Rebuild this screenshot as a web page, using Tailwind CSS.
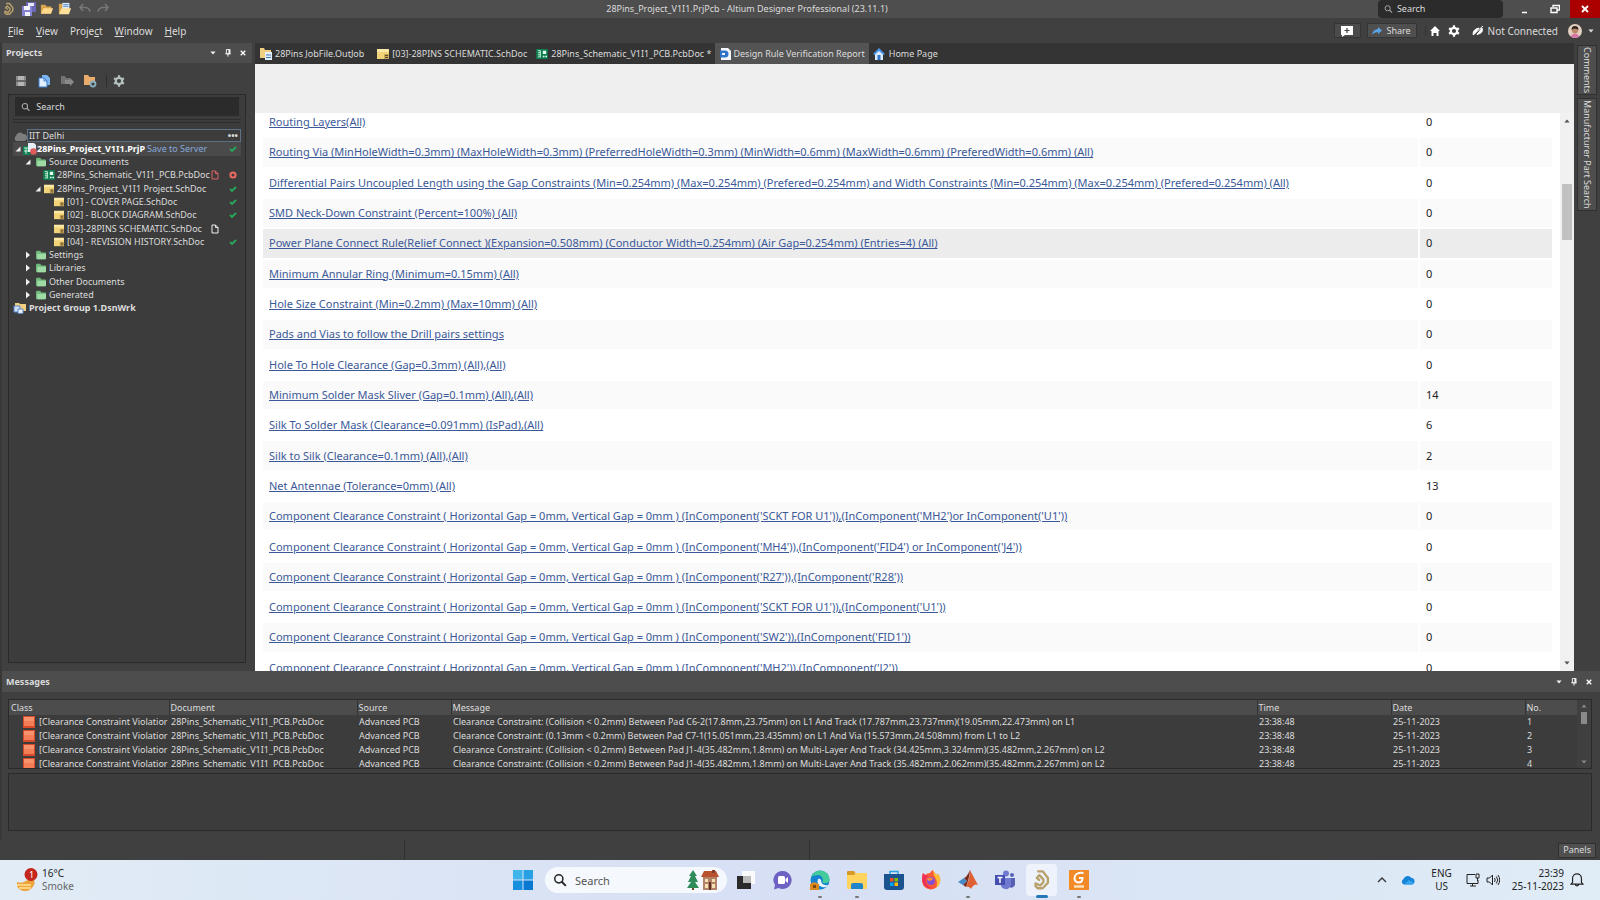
<!DOCTYPE html>
<html lang="en">
<head>
    <meta charset="UTF-8">
    <meta name="viewport" content="width=device-width, initial-scale=1">
    <title>28Pins_Project_V1I1.PrjPcb - Altium Designer Professional (23.11.1)</title>
    <script src="https://cdn.jsdelivr.net/npm/@tailwindcss/browser@4"></script>
</head>
<body class="flex h-screen flex-col overflow-hidden bg-[#404040] font-['Noto_Sans',sans-serif] text-[9px] leading-3 text-[#dcdcdc]">

<!-- shared icons -->
<svg class="hidden">
    <symbol id="logo" viewBox="0 0 16 16"><path d="M4.500 1.700H8.500L12.300 6.500V10L8.500 14H5L3.300 12.500V10.500L6.800 12 9 9.500V7.500L6 4.500 4.200 6.500 6.500 8.500" fill="none" stroke="#b8a06c" stroke-width="1.700" stroke-linejoin="round"/></symbol>
    <symbol id="sch" viewBox="0 0 14 12"><path d="M1 1h12v10H1z" fill="#f3d377"/><path d="M1 1h12v3H1z" fill="#fbe8a6"/><path d="M8 6h5v5H8z" fill="#c9a75a"/><path d="M9 7.500h3M9 9.500h3" stroke="#5a4a2a"/></symbol>
    <symbol id="pcb" viewBox="0 0 14 12"><path d="M0 0h14v12H0z" fill="#0f7c50"/><path d="M2 2h3M2 4.500h3M2 7h3M2 9.500h3M5 2v8" stroke="#c5f3da" stroke-width="1.200"/><path d="M8 2h4v4H8zM8 8h2v2H8zM11 8h2v2h-2z" fill="#e5fff2"/></symbol>
    <symbol id="folder" viewBox="0 0 14 12"><path d="M1 2.500Q1 1 2.500 1H6l1.500 2H12q1 0 1 1v6q0 1-1 1H2q-1 0-1-1z" fill="#6fb77a"/><path d="M2.500 4.500H13V10q0 1-1 1H2.500z" fill="#9fdca5"/></symbol>
    <symbol id="yfolder" viewBox="0 0 16 14"><path d="M1 2h5l1.500 2H13v8H1z" fill="#d6a44c"/><path d="M4 6h11l-2.500 6.500H1z" fill="#ffd98c"/></symbol>
    <symbol id="pin" viewBox="0 0 8 10"><path d="M2 .5h4.500V6H2zM.5 6h7M4 6v3.500" fill="none" stroke="#f2f2f2" stroke-width="1.200"/><path d="M4.500 1H6.500v5H4.500z" fill="#f2f2f2"/></symbol>
    <symbol id="cross" viewBox="0 0 8 8"><path d="M1 1l6 6M7 1L1 7" stroke="#fff" stroke-width="1.800"/></symbol>
    <symbol id="down" viewBox="0 0 8 5"><path d="M.5.500h7L4 4.500z" fill="currentColor"/></symbol>
    <symbol id="up" viewBox="0 0 8 5"><path d="M.5 4.500h7L4 .5z" fill="currentColor"/></symbol>
    <symbol id="open" viewBox="0 0 6 6"><path d="M5.500.500v5h-5z" fill="#f0f0f0"/></symbol>
    <symbol id="closed" viewBox="0 0 6 8"><path d="M1 .5L5 4 1 7.500z" fill="#f0f0f0"/></symbol>
    <symbol id="check" viewBox="0 0 8 6"><path d="M1 3l2 2 4-4" fill="none" stroke="#27a85a" stroke-width="1.800"/></symbol>
    <symbol id="page" viewBox="0 0 8 10"><path d="M1 1h3.500L7 3.500V9H1zM4.500 1v2.500H7" fill="none" stroke="currentColor"/></symbol>
    <symbol id="lens" viewBox="0 0 12 12"><circle cx="5" cy="5" r="3.500" fill="none" stroke="currentColor" stroke-width="1.300"/><path d="M7.500 7.500L11 11" stroke="currentColor" stroke-width="1.600"/></symbol>
    <symbol id="gear" viewBox="0 0 12 12"><circle cx="6" cy="6" r="3.200" fill="none" stroke="currentColor" stroke-width="2.200"/><path d="M6 .3v2M6 9.700v2M1.100 3.200l1.600 1M9.300 7.800l1.600 1M1.100 8.800l1.600-1M9.300 4.200l1.600-1" stroke="currentColor" stroke-width="2.200"/></symbol>
    <symbol id="square" viewBox="0 0 12 12"><path d="M0 0h12v12H0z" fill="#d94a2b"/><path d="M1 1h10v9H1z" fill="#f27d56"/><path d="M1 1h10v4H1z" fill="#f6926c"/></symbol>
</svg>

<!-- title bar -->
<header class="flex h-[18px] shrink-0 items-center bg-[#4e4e4e]">
    <div class="flex flex-1 items-center gap-1 pl-0.5">
        <svg class="size-3.5"><use href="#logo"/></svg>
        <button class="ml-0.5" aria-label="Save all"><svg class="h-3.5 w-3.5" viewBox="0 0 14 14"><path d="M4 0h10v10H4z" fill="#6a68b5"/><path d="M6 1h6v3H6z" fill="#e8e8ff"/><path d="M0 4h10v10H0z" fill="#8583d1"/><path d="M2 4h6v4H2zM3 10h5v4H3z" fill="#f3f3ff"/></svg></button>
        <button aria-label="Open"><svg class="h-3.5 w-3.5"><use href="#yfolder"/></svg></button>
        <button aria-label="Open project"><svg class="h-3.5 w-3.5" viewBox="0 0 16 14"><path d="M1 1h8v11H1z" fill="#d6a44c"/><path d="M5 0h8v8H5z" fill="#dcecff"/><path d="M6 2h6M6 4h6" stroke="#4a7fc0"/><path d="M4 6h11l-2.500 7H1z" fill="#ffe09a"/></svg></button>
        <button class="ml-0.5" aria-label="Undo"><svg class="h-3 w-3.5" viewBox="0 0 14 12"><path d="M5 1L2 4.500 5 8M2 4.500h5q4 0 5 4" fill="none" stroke="#777" stroke-width="1.600"/></svg></button>
        <button aria-label="Redo"><svg class="h-3 w-3.5" viewBox="0 0 14 12"><path d="M9 1l3 3.500L9 8M12 4.500H7q-4 0-5 4" fill="none" stroke="#777" stroke-width="1.600"/></svg></button>
    </div>
    <h1 class="pr-[108px]">28Pins_Project_V1I1.PrjPcb - Altium Designer Professional (23.11.1)</h1>
    <div class="flex h-full flex-1 items-center justify-end">
        <label class="flex h-full w-[125px] items-center gap-1 rounded-sm bg-[#2b2b2b] px-1.5">
            <svg class="size-2.5 text-[#aaa]"><use href="#lens"/></svg>
            <input class="w-full bg-transparent placeholder:text-[#dcdcdc]" type="search" placeholder="Search" aria-label="Search commands">
        </label>
        <button class="ml-1.5 grid h-full w-[30px] place-items-center" aria-label="Minimize"><svg class="size-2.5" viewBox="0 0 10 10"><path d="M3 8.500h5" stroke="#fff" stroke-width="1.500"/></svg></button>
        <button class="grid h-full w-[31px] place-items-center" aria-label="Restore"><svg class="size-2.5" viewBox="0 0 10 10"><path d="M3 3V1.500h6.500V6H7.500M1 4h6v4.500H1z" fill="none" stroke="#fff" stroke-width="1.400"/></svg></button>
        <button class="grid h-full w-[30px] place-items-center bg-[#ab0000]" aria-label="Close"><svg class="size-2"><use href="#cross"/></svg></button>
    </div>
</header>

<!-- menu bar -->
<div class="flex h-[25px] shrink-0 items-center justify-between bg-[#404040] pl-2 text-[10px]">
    <nav class="flex items-center gap-3">
        <button><u>F</u>ile</button>
        <button><u>V</u>iew</button>
        <button>Proje<u>c</u>t</button>
        <button><u>W</u>indow</button>
        <button><u>H</u>elp</button>
    </nav>
    <div class="flex items-center pr-1.5">
        <button class="grid h-[15px] w-[27px] place-items-center border border-[#353535] bg-[#4b4b4b]" aria-label="New comment"><svg class="h-3 w-3.5" viewBox="0 0 14 12"><path d="M1 1h12v9H5l-3 2v-2H1z" fill="#fff"/><path d="M7 3v5M4.500 5.500h5" stroke="#444" stroke-width="1.200"/></svg></button>
        <button class="ml-1.5 flex h-[15px] w-[50px] items-center justify-center gap-1 border border-[#353535] bg-[#4f4f4f] text-[9px]"><svg class="h-2 w-2.5" viewBox="0 0 10 8"><path d="M6 0l4 3.500L6 7V5Q2 5 0 7.500 1 2.500 6 2z" fill="#5aa5e6"/></svg>Share</button>
        <button class="ml-2 border-l border-[#353535] pl-1" aria-label="Home"><svg class="size-2.5" viewBox="0 0 10 10"><path d="M5 0l5 5H8.500v5h-2V7h-3v3h-2V5H0z" fill="#fff"/></svg></button>
        <button class="ml-2 text-white" aria-label="Settings"><svg class="size-3"><use href="#gear"/></svg></button>
        <button class="ml-3 flex items-center gap-1"><svg class="size-3" viewBox="0 0 12 12"><path d="M1 10L11 1M1 9.500Q1 4 7 3L2.500 9zM5 9.500l5-6.500q2 5-5 6.500" fill="#fff" stroke="#fff"/></svg>Not Connected</button>
        <button class="ml-2.5 flex items-center gap-1.5 text-[#ddd]" aria-label="Account"><svg class="size-3.5" viewBox="0 0 14 14"><circle cx="7" cy="7" r="7" fill="#e3cfc0"/><path d="M2.500 12q4.500-5 9 0-4.500 4-9 0" fill="#d774a8"/><circle cx="7" cy="6.500" r="3" fill="#b98564"/><path d="M3.500 6Q3.500 2 7 2t3.500 4Q9 4.500 7 4.500T3.500 6" fill="#30231d"/></svg><svg class="h-1 w-1.5"><use href="#down"/></svg></button>
    </div>
</div>

<div class="flex min-h-0 flex-1">
    <!-- projects panel -->
    <aside class="flex w-[252px] shrink-0 flex-col border-l-2 border-[#383838]">
        <div class="flex h-5 shrink-0 items-center gap-2 bg-[#4d4d4d] pr-1.5 pl-1">
            <h2 class="flex-1 font-bold">Projects</h2>
            <button class="text-[#f0f0f0]" aria-label="Panel options"><svg class="h-1 w-1.5"><use href="#down"/></svg></button>
            <button aria-label="Pin panel"><svg class="h-2 w-2"><use href="#pin"/></svg></button>
            <button aria-label="Close panel"><svg class="size-1.5"><use href="#cross"/></svg></button>
        </div>
        <div class="flex h-[31px] shrink-0 items-center gap-[9px] pt-1 pl-3">
            <button aria-label="Save"><svg class="size-3.5" viewBox="0 0 14 14"><path d="M2 2h10v10H2z" fill="#8a8a8a"/><path d="M4 2h6v4H4zM4 8h6v4H4z" fill="#b5b5b5"/><path d="M2 7h10" stroke="#444"/></svg></button>
            <button aria-label="Compile"><svg class="size-3.5" viewBox="0 0 14 14"><path d="M5 1h5l3 3v7H5z" fill="#7db5f0"/><path d="M2 4h5l3 3v6H2z" fill="#e2f0ff" stroke="#3d7fd0"/><path d="M7 4v3h3" fill="none" stroke="#3d7fd0"/></svg></button>
            <button aria-label="Explore"><svg class="size-3.5" viewBox="0 0 14 14"><path d="M1 2h4l1 2h4v6H1z" fill="#737373"/><path d="M5 6h5V4l4 4-4 4v-2H5z" fill="#8a8a8a"/></svg></button>
            <button aria-label="Project options"><svg class="size-3.5" viewBox="0 0 14 14"><path d="M1 1h4l1.500 2H12v8H1z" fill="#e9ad6c"/><circle cx="10" cy="10" r="2.500" fill="#404040" stroke="#8ab0c0" stroke-width="1.800"/></svg></button>
            <button class="border-l border-[#2c2c2c] pl-1.5 text-[#b5c0c0]" aria-label="Panel settings"><svg class="size-3"><use href="#gear"/></svg></button>
        </div>
        <div class="mr-1.5 mb-2 ml-1.5 flex min-h-0 flex-1 flex-col border border-[#2a2a2a] bg-[#3c3c3c]">
            <label class="mx-1.5 mt-0.5 flex h-[19px] shrink-0 items-center gap-1.5 bg-[#2b2b2b] px-1.5">
                <svg class="size-2.5 text-[#aaa]"><use href="#lens"/></svg>
                <input class="w-full bg-transparent placeholder:text-[#dcdcdc]" type="search" placeholder="Search" aria-label="Search projects">
            </label>
            <div class="mx-1 mt-[3px] h-1 shrink-0 border-y border-[#2e2e2e]"></div>
            <ul class="mx-1 mt-1.5 grid h-[186px] auto-rows-fr grid-cols-1">
                <li class="flex items-center"><svg class="h-3 w-3.5" viewBox="0 0 14 12"><path d="M3 11a3 3 0 0 1 0-5 4 4 0 0 1 7-2 3.500 3.500 0 0 1 1 7z" fill="#7d7d7d"/></svg><span class="flex h-full flex-1 items-center justify-between border border-[#5d7184] pr-0.5 pl-px">IIT Delhi <b class="leading-none">•••</b></span></li>
                <li class="flex items-center bg-[#4a4a4a] pr-1"><svg class="ml-0.5 size-1.5"><use href="#open"/></svg><svg class="ml-0.5 h-3 w-3.5" viewBox="0 0 14 12"><path d="M0 3h7v9H0z" fill="#0f7c50"/><path d="M1 5h4M1 8h4M3 5v6" stroke="#c5f3da"/><path d="M5 0h6l2 2v7H5z" fill="#e8eef6"/><circle cx="10.500" cy="8.500" r="3.300" fill="#dc5c5c"/></svg><b class="whitespace-nowrap text-white">28Pins_Project_V1I1.PrjP</b><a class="ml-0.5 flex-1 whitespace-nowrap text-[#86a8dc]" href="#">Save to Server</a><svg class="h-1.5 w-2"><use href="#check"/></svg></li>
                <li class="flex items-center pl-3"><svg class="size-1.5"><use href="#open"/></svg><svg class="mr-0.5 ml-1 h-2.5 w-3"><use href="#folder"/></svg>Source Documents</li>
                <li class="flex items-center pr-1 pl-[30px]"><svg class="mr-0.5 h-2.5 w-3"><use href="#pcb"/></svg><span class="flex-1 whitespace-nowrap">28Pins_Schematic_V1I1_PCB.PcbDoc</span><svg class="mr-2.5 h-2.5 w-2 text-[#dc6262]"><use href="#page"/></svg><svg class="size-2" viewBox="0 0 8 8"><circle cx="4" cy="4" r="2.600" fill="none" stroke="#f06a62" stroke-width="2"/></svg></li>
                <li class="flex items-center pr-1 pl-[22px]"><svg class="size-1.5"><use href="#open"/></svg><svg class="mr-0.5 ml-0.5 h-2.5 w-3"><use href="#sch"/></svg><span class="flex-1">28Pins_Project_V1I1 Project.SchDoc</span><svg class="h-1.5 w-2"><use href="#check"/></svg></li>
                <li class="flex items-center pr-1 pl-10"><svg class="mr-0.5 h-2.5 w-3"><use href="#sch"/></svg><span class="flex-1">[01] - COVER PAGE.SchDoc</span><svg class="h-1.5 w-2"><use href="#check"/></svg></li>
                <li class="flex items-center pr-1 pl-10"><svg class="mr-0.5 h-2.5 w-3"><use href="#sch"/></svg><span class="flex-1">[02] - BLOCK DIAGRAM.SchDoc</span><svg class="h-1.5 w-2"><use href="#check"/></svg></li>
                <li class="flex items-center pr-1 pl-10"><svg class="mr-0.5 h-2.5 w-3"><use href="#sch"/></svg><span class="flex-1">[03]-28PINS SCHEMATIC.SchDoc</span><svg class="mr-[18px] h-2.5 w-2 text-[#eee]"><use href="#page"/></svg></li>
                <li class="flex items-center pr-1 pl-10"><svg class="mr-0.5 h-2.5 w-3"><use href="#sch"/></svg><span class="flex-1">[04] - REVISION HISTORY.SchDoc</span><svg class="h-1.5 w-2"><use href="#check"/></svg></li>
                <li class="flex items-center pl-3"><svg class="h-2 w-1.5"><use href="#closed"/></svg><svg class="mr-0.5 ml-1 h-2.5 w-3"><use href="#folder"/></svg>Settings</li>
                <li class="flex items-center pl-3"><svg class="h-2 w-1.5"><use href="#closed"/></svg><svg class="mr-0.5 ml-1 h-2.5 w-3"><use href="#folder"/></svg>Libraries</li>
                <li class="flex items-center pl-3"><svg class="h-2 w-1.5"><use href="#closed"/></svg><svg class="mr-0.5 ml-1 h-2.5 w-3"><use href="#folder"/></svg>Other Documents</li>
                <li class="flex items-center pl-3"><svg class="h-2 w-1.5"><use href="#closed"/></svg><svg class="mr-0.5 ml-1 h-2.5 w-3"><use href="#folder"/></svg>Generated</li>
                <li class="flex items-center font-bold"><svg class="mr-0.5 h-3 w-3.5" viewBox="0 0 14 12"><path d="M2 1h4l1 1h6v7H2z" fill="#f1cf80"/><path d="M1 4h6v6H1z" fill="#cfe2fa" stroke="#5a86c4"/><path d="M5 7h5v4.500H5z" fill="#e8f1ff" stroke="#5a86c4"/></svg>Project Group 1.DsnWrk</li>
            </ul>
        </div>
    </aside>

    <!-- document area -->
    <main class="ml-[3px] flex min-w-0 flex-1 flex-col">
        <div class="flex h-[21px] shrink-0 items-center bg-[#343434]">
            <button class="flex h-full items-center gap-0.5 px-1"><svg class="size-3.5" viewBox="0 0 14 14"><path d="M1 1h4l1 2h6v8H1z" fill="#f1cf80"/><path d="M6 5h7v8H6z" fill="#e4effc"/><path d="M7 8h5M7 10.500h5" stroke="#4579b8"/></svg>28Pins JobFile.OutJob</button>
            <button class="ml-1 flex h-full items-center gap-0.5 px-1"><svg class="h-3 w-3.5"><use href="#sch"/></svg>[03]-28PINS SCHEMATIC.SchDoc</button>
            <button class="flex h-full items-center gap-0.5 px-1"><svg class="h-2.5 w-3.5"><use href="#pcb"/></svg>28Pins_Schematic_V1I1_PCB.PcbDoc *</button>
            <button class="flex h-full items-center gap-0.5 bg-[#545454] px-1"><svg class="h-3.5 w-3" viewBox="0 0 12 14"><path d="M2 1h7l3 3v9H2z" fill="#f3f7fc"/><path d="M1 3.500h5a3.500 3.500 0 0 1 0 7H1z" fill="#2f74c8"/><path d="M3 6h3v2H3z" fill="#f3f7fc"/></svg>Design Rule Verification Report</button>
            <button class="flex h-full items-center gap-1 px-1"><svg class="size-3" viewBox="0 0 12 12"><path d="M2 5v7h8V5L6 2z" fill="#dcecff"/><path d="M6 0l6 6-1.500 1L6 3 1.500 7 0 6z" fill="#4b95e8"/><path d="M4.500 7h3v5h-3z" fill="#2f74c8"/></svg>Home Page</button>
        </div>
        <div class="flex min-h-0 flex-1 flex-col bg-white text-[#222]">
            <div class="h-[49px] shrink-0 bg-[#efefef]"></div>
            <div class="flex min-h-0 flex-1">
                <div class="min-w-0 flex-1 overflow-hidden pr-1.5 pl-1.5">
                    <table class="-mt-[7px] h-[578px] w-full border-separate border-spacing-0.5 text-[11px] leading-[14px]">
                        <tbody id="rules"></tbody>
                    </table>
                </div>
                <div class="flex w-[14px] flex-col items-center bg-[#f1f1f1] py-1.5 text-[#505050]">
                    <svg class="h-1 w-1.5 shrink-0"><use href="#up"/></svg>
                    <div class="mt-[61px] h-[56px] w-2.5 bg-[#c1c1c1]"></div>
                    <svg class="mt-auto h-1 w-1.5 shrink-0"><use href="#down"/></svg>
                </div>
            </div>
        </div>
    </main>

    <!-- collapsed panels on the right edge -->
    <nav class="flex w-[26px] shrink-0 flex-col items-center gap-[3px] bg-[#404040] pt-0.5">
        <button class="border border-[#303030] bg-[#4e4e4e] px-px py-[3px] [writing-mode:vertical-rl]">Comments</button>
        <button class="border border-[#303030] bg-[#4e4e4e] px-px py-[3px] [writing-mode:vertical-rl]">Manufacturer Part Search</button>
    </nav>
</div>

<!-- messages panel -->
<section class="flex h-[169px] shrink-0 flex-col border-l-2 border-[#383838] bg-[#404040]">
    <div class="flex h-[21px] shrink-0 items-center gap-2 bg-[#4d4d4d] pr-2 pl-1">
        <h2 class="flex-1 font-bold">Messages</h2>
        <button class="text-[#f0f0f0]" aria-label="Panel options"><svg class="h-1 w-1.5"><use href="#down"/></svg></button>
        <button aria-label="Pin panel"><svg class="size-2"><use href="#pin"/></svg></button>
        <button aria-label="Close panel"><svg class="size-1.5"><use href="#cross"/></svg></button>
    </div>
    <div class="mt-[7px] mr-2 ml-1.5 flex h-[70px] shrink-0 overflow-hidden border border-[#2a2a2a] bg-[#3c3c3c]">
        <table class="min-w-0 flex-1 table-fixed border-collapse self-start text-left whitespace-nowrap">
            <colgroup>
                <col class="w-[160px]"><col class="w-[188px]"><col class="w-[94px]"><col>
                <col class="w-[134px]"><col class="w-[134px]"><col class="w-[52px]">
            </colgroup>
            <thead class="bg-[#4c4c4c]">
                <tr class="h-[15px]">
                    <th class="pl-0.5 font-normal">Class</th>
                    <th class="border-l border-[#333] pl-px font-normal">Document</th>
                    <th class="border-l border-[#333] pl-px font-normal">Source</th>
                    <th class="border-l border-[#333] pl-px font-normal">Message</th>
                    <th class="border-l border-[#333] pl-px font-normal">Time</th>
                    <th class="border-l border-[#333] pl-px font-normal">Date</th>
                    <th class="border-l border-[#333] pl-px font-normal">No.</th>
                </tr>
            </thead>
            <tbody id="messages"></tbody>
        </table>
        <div class="flex w-3.5 flex-col items-center bg-[#404040] py-1 text-[#888]">
            <svg class="h-1 w-1.5 shrink-0"><use href="#up"/></svg>
            <div class="mt-1 h-3 w-1.5 bg-[#8a8a8a]"></div>
            <svg class="mt-auto h-1 w-1.5 shrink-0"><use href="#down"/></svg>
        </div>
    </div>
    <div class="mt-1 mr-2 mb-[9px] ml-1.5 flex-1 border border-[#2a2a2a] bg-[#3c3c3c]"></div>
</section>

<!-- status bar -->
<div class="grid h-5 shrink-0 grid-cols-[405px_405px_1fr] bg-[#404040]">
    <div class="border-r border-[#303030]"></div>
    <div class="border-r border-[#303030]"></div>
    <div class="flex items-center justify-end pr-1"><button class="h-[15px] border border-[#303030] bg-[#505050] px-1 leading-3">Panels</button></div>
</div>

<!-- taskbar -->
<footer class="grid h-10 shrink-0 grid-cols-[1fr_auto_1fr] items-center bg-linear-to-r from-[#e1ecf6] via-[#d6dff4] to-[#e0ecf6] text-[10px] leading-[13px] text-[#222]">
    <button class="flex items-center gap-0.5 pl-4 text-left">
        <svg class="size-6" viewBox="0 0 24 24"><path d="M1 14q6 3 14-5 5 3 3 8-3 6-9 6T1 18z" fill="#eea23c"/><path d="M1 17h14M3 20h12" stroke="#ffd480" stroke-width="2"/><circle cx="15" cy="6.500" r="6.500" fill="#c4261d"/><text x="13" y="10" fill="#fff" font-size="9">1</text></svg>
        <span>16°C<br><span class="text-[#666]">Smoke</span></span>
    </button>
    <div class="flex items-center pl-2.5">
        <button class="mr-3" aria-label="Start"><svg class="size-5" viewBox="0 0 20 20"><path d="M0 0h9.500v9.500H0z" fill="#3fb5ec"/><path d="M10.500 0H20v9.500h-9.500z" fill="#2aa0e4"/><path d="M0 10.500h9.500V20H0z" fill="#168fdd"/><path d="M10.500 10.500H20V20h-9.500z" fill="#0878d0"/></svg></button>
        <label class="flex h-[26px] w-[182px] items-center gap-2 rounded-full bg-[#f5f8fd] px-2">
            <svg class="size-3.5 shrink-0"><use href="#lens" width="14" height="14"/></svg>
            <input class="w-0 flex-1 bg-transparent text-[11px] placeholder:text-[#555]" type="search" placeholder="Search" aria-label="Search Windows">
            <svg class="h-5 w-8 shrink-0" viewBox="0 0 32 20"><path d="M6 0l4 6H8l3 6H8l4 6H0l4-6H1l3-6H2z" fill="#2f8b57"/><path d="M5 18h2v2H5z" fill="#704828"/><path d="M16 6h14v14H16z" fill="#b48269"/><path d="M14 7l3-6h12l3 6z" fill="#b9532f"/><path d="M25 0h3v3h-3z" fill="#80402e"/><path d="M18 9h3v3h-3zM25 9h3v3h-3zM18 14h3v4h-3zM25 14h3v4h-3z" fill="#f6e3b2"/><path d="M22 12h2v8h-2z" fill="#5b3325"/></svg>
        </label>
        <div class="flex">
            <button class="grid h-9 w-[37px] place-items-center" aria-label="Task view"><svg class="size-5" viewBox="0 0 20 20"><path d="M6 1h13v13H6z" fill="#fafafa"/><path d="M1 6h6v7h8v6H1z" fill="#2b2b2b"/><path d="M7 6h8v7H7z" fill="#bbb"/></svg></button>
            <button class="grid h-9 w-[37px] place-items-center" aria-label="Chat"><svg class="size-5" viewBox="0 0 20 20"><path d="M10 1a9 9 0 1 1-4.500 17L1 19.500 2 15A9 9 0 0 1 10 1" fill="#6d62c3"/><rect x="5" y="6" width="7" height="8" rx="1.500" fill="#fff"/><path d="M12.500 9l2.500-2v6l-2.500-2z" fill="#fff"/></svg></button>
            <button class="relative grid h-9 w-[37px] place-items-center" aria-label="Edge"><svg class="size-5" viewBox="0 0 20 20"><circle cx="10" cy="10" r="9.500" fill="#1583d0"/><path d="M1 7Q4 0 11 .5 19 2 19.500 9q0 5-6 4-2-1-.5-3-1-5-5-5-4 0-7 2" fill="#43cc9a"/><path d="M8 9q-2 6 4 8 5 1 6-2-7 1-7-5-1-2-3-1" fill="#e8f4fb"/><path d="M0 14l4-2 5 2v6H0z" fill="#d98a20"/><path d="M3 15h3v3H3z" fill="#7b4a12"/></svg><i class="absolute bottom-0 h-0.5 w-1 rounded bg-[#777]"></i></button>
            <button class="relative grid h-9 w-[37px] place-items-center" aria-label="File Explorer"><svg class="size-5" viewBox="0 0 20 20"><path d="M0 2q0-1 1-1h6l2 3h10q1 0 1 1v5H0z" fill="#d89a26"/><path d="M0 5h7l2-2h10q1 0 1 1v14q0 1-1 1H1q-1 0-1-1z" fill="#ffd45f"/><path d="M4 19v-4q0-2 2-2h8q2 0 2 2v4z" fill="#2186c9"/></svg><i class="absolute bottom-0 h-0.5 w-1 rounded bg-[#777]"></i></button>
            <button class="grid h-9 w-[37px] place-items-center" aria-label="Microsoft Store"><svg class="size-5" viewBox="0 0 20 20"><path d="M6 5V1.500h8V5" fill="none" stroke="#2ba3e0" stroke-width="1.500"/><path d="M0 4h20v13q0 3-3 3H3q-3 0-3-3z" fill="#1b5391"/><path d="M6 8h3.500v3.500H6z" fill="#f25022"/><path d="M10.500 8H14v3.500h-3.500z" fill="#7fba00"/><path d="M6 12.500h3.500V16H6z" fill="#00a4ef"/><path d="M10.500 12.500H14V16h-3.500z" fill="#ffb900"/></svg></button>
            <button class="grid h-9 w-[37px] place-items-center" aria-label="Firefox"><svg class="size-5" viewBox="0 0 20 20"><path d="M2 3l2 2q2-2 5-2 1-2 3-3 1 3 4 5l1-1q3 4 2 8-2 7-9 7.500Q2 19 1 11q0-5 1-8" fill="#ff5a36"/><path d="M12 0q1 3 4 5l1-1q3 4 2 8-1 4-4 6 2-5 0-9-3-4-3-9" fill="#ffc038"/><path d="M1 10q0-4 1-7l2 2q2 1 4 1-4 2-3 6 1 5 7 6-9 2-11-8" fill="#ef3157"/><circle cx="10" cy="11" r="4" fill="#8650ce"/><path d="M6 9q4-3 6 0l-3 2q-2 0-3-2" fill="#ff8a3c"/></svg></button>
            <button class="relative grid h-9 w-[37px] place-items-center" aria-label="MATLAB"><svg class="size-5" viewBox="0 0 20 20"><path d="M0 12l6-4 3 3-4 4z" fill="#458ac6"/><path d="M6 8q3-1 6-8-1 10-4 17l-3-2 4-4z" fill="#7b2b1d"/><path d="M12 0q3 6 8 15-4-2-7 4-2-3-5-2 4-8 4-17" fill="#df6133"/></svg><i class="absolute bottom-0 h-0.5 w-1 rounded bg-[#777]"></i></button>
            <button class="grid h-9 w-[37px] place-items-center" aria-label="Teams"><svg class="size-5" viewBox="0 0 20 20"><circle cx="11" cy="3.500" r="3" fill="#7079d0"/><circle cx="17" cy="5" r="2" fill="#5961b5"/><path d="M14 8h6v7q-2 4-6 2z" fill="#5961b5"/><path d="M6 8h10v7q-2 5-6 4t-4-4z" fill="#7079d0"/><path d="M0 5h10v10H0z" fill="#444db0"/><path d="M2.500 7.500h5M5 7.500V13" stroke="#fff" stroke-width="1.500"/></svg></button>
            <button class="relative grid h-9 w-[37px] place-items-center" aria-label="Altium Designer"><span class="grid h-8 w-[31px] place-items-center rounded bg-[#eef3fb]"><svg class="size-[22px]"><use href="#logo"/></svg></span><i class="absolute bottom-0 h-[3px] w-3 rounded bg-[#2378b8]"></i></button>
            <button class="relative grid h-9 w-[37px] place-items-center" aria-label="Foxit PDF Editor"><svg class="size-5" viewBox="0 0 20 20"><path d="M0 0h20v20H0z" fill="#f28a27"/><path d="M14.500 3Q6 2 5.500 8q0 4 4 4.500 4 0 4-4.500H10" fill="none" stroke="#fff" stroke-width="2"/><path d="M5 16.500h10" stroke="#ffe0b8" stroke-width="2.500"/></svg><i class="absolute bottom-0 h-0.5 w-1 rounded bg-[#777]"></i></button>
        </div>
    </div>
    <div class="flex items-center justify-end pr-4">
        <button aria-label="Hidden icons"><svg class="h-2 w-2.5" viewBox="0 0 10 8"><path d="M1 6l4-4 4 4" fill="none" stroke="#333" stroke-width="1.300"/></svg></button>
        <button class="ml-3.5" aria-label="OneDrive"><svg class="h-2.5 w-3.5" viewBox="0 0 14 10"><path d="M3 9.500a3 3 0 0 1-.5-5.500 4.500 4.500 0 0 1 8-1 3.300 3.300 0 0 1 .5 6.500z" fill="#1583d8"/><path d="M3 9.500l5-4.500 5 3q-1 1.500-2.500 1.500z" fill="#34a6ee"/></svg></button>
        <button class="ml-4 text-center">ENG<br>US</button>
        <button class="ml-3.5 flex items-center gap-1.5" aria-label="Network and volume"><svg class="size-3.5" viewBox="0 0 14 14"><path d="M9 1.500H1v9h11V7M4 13h6M6.500 10.500V13M10 1h3v4h-3zM11.500 5v3" fill="none" stroke="#222"/></svg><svg class="size-3.5" viewBox="0 0 14 14"><path d="M1 5h2.500L6.500 2v10l-3-3H1zM8.500 5q1.500 2 0 4M10.300 3.500q3 3.500 0 7M12 2q3.500 5 0 10" fill="none" stroke="#222"/></svg></button>
        <button class="ml-3 text-right">23:39<br>25-11-2023</button>
        <button class="ml-1.5" aria-label="Notifications"><svg class="size-3.5" viewBox="0 0 12 12"><path d="M1 9.500h10L9.800 8V4.500a3.800 3.800 0 0 0-7.600 0V8zM4.500 9.500a1.500 1.500 0 0 0 3 0" fill="none" stroke="#222"/></svg></button>
    </div>
</footer>

<script>
    const gap = 'Component Clearance Constraint ( Horizontal Gap = 0mm, Vertical Gap = 0mm ) ';

    // rule text, number of violations
    const rules = [
        ['Routing Layers(All)', 0],
        ['Routing Via (MinHoleWidth=0.3mm) (MaxHoleWidth=0.3mm) (PreferredHoleWidth=0.3mm) (MinWidth=0.6mm) (MaxWidth=0.6mm) (PreferedWidth=0.6mm) (All)', 0],
        ['Differential Pairs Uncoupled Length using the Gap Constraints (Min=0.254mm) (Max=0.254mm) (Prefered=0.254mm) and Width Constraints (Min=0.254mm) (Max=0.254mm) (Prefered=0.254mm) (All)', 0],
        ['SMD Neck-Down Constraint (Percent=100%) (All)', 0],
        ['Power Plane Connect Rule(Relief Connect )(Expansion=0.508mm) (Conductor Width=0.254mm) (Air Gap=0.254mm) (Entries=4) (All)', 0],
        ['Minimum Annular Ring (Minimum=0.15mm) (All)', 0],
        ['Hole Size Constraint (Min=0.2mm) (Max=10mm) (All)', 0],
        ['Pads and Vias to follow the Drill pairs settings', 0],
        ['Hole To Hole Clearance (Gap=0.3mm) (All),(All)', 0],
        ['Minimum Solder Mask Sliver (Gap=0.1mm) (All),(All)', 14],
        ['Silk To Solder Mask (Clearance=0.091mm) (IsPad),(All)', 6],
        ['Silk to Silk (Clearance=0.1mm) (All),(All)', 2],
        ['Net Antennae (Tolerance=0mm) (All)', 13],
        [gap + "(InComponent('SCKT FOR U1')),(InComponent('MH2')or InComponent('U1'))", 0],
        [gap + "(InComponent('MH4')),(InComponent('FID4') or InComponent('J4'))", 0],
        [gap + "(InComponent('R27')),(InComponent('R28'))", 0],
        [gap + "(InComponent('SCKT FOR U1')),(InComponent('U1'))", 0],
        [gap + "(InComponent('SW2')),(InComponent('FID1'))", 0],
        [gap + "(InComponent('MH2')),(InComponent('J2'))", 0],
    ];

    const messages = [
        'Clearance Constraint: (Collision < 0.2mm) Between Pad C6-2(17.8mm,23.75mm) on L1 And Track (17.787mm,23.737mm)(19.05mm,22.473mm) on L1',
        'Clearance Constraint: (0.13mm < 0.2mm) Between Pad C7-1(15.051mm,23.435mm) on L1 And Via (15.573mm,24.508mm) from L1 to L2',
        'Clearance Constraint: (Collision < 0.2mm) Between Pad J1-4(35.482mm,1.8mm) on Multi-Layer And Track (34.425mm,3.324mm)(35.482mm,2.267mm) on L2',
        'Clearance Constraint: (Collision < 0.2mm) Between Pad J1-4(35.482mm,1.8mm) on Multi-Layer And Track (35.482mm,2.062mm)(35.482mm,2.267mm) on L2',
    ];

    document.getElementById('rules').innerHTML = rules.map(([text, count], i) => `
        <tr class="${i === 4 ? 'bg-[#ececec]' : i % 2 ? 'bg-[#fafafa]' : 'bg-white'}">
            <td class="py-0 pl-1.5 whitespace-nowrap"><a class="text-[#3b5998] underline" href="#">${text}</a></td>
            <td class="w-[132px] py-0 pl-1.5">${count}</td>
        </tr>`).join('');

    document.getElementById('messages').innerHTML = messages.map((text, i) => `
        <tr class="h-[14px]">
            <td class="overflow-hidden p-0"><span class="flex items-center gap-1 pl-3.5"><svg class="size-3 shrink-0"><use href="#square"/></svg>[Clearance Constraint Violatior</span></td>
            <td class="p-0 pl-0.5">28Pins_Schematic_V1I1_PCB.PcbDoc</td>
            <td class="p-0 pl-0.5">Advanced PCB</td>
            <td class="p-0 pl-0.5">${text.replace('<', '&lt;')}</td>
            <td class="p-0 pl-0.5">23:38:48</td>
            <td class="p-0 pl-0.5">25-11-2023</td>
            <td class="p-0 pl-0.5">${i + 1}</td>
        </tr>`).join('');
</script>
</body>
</html>
